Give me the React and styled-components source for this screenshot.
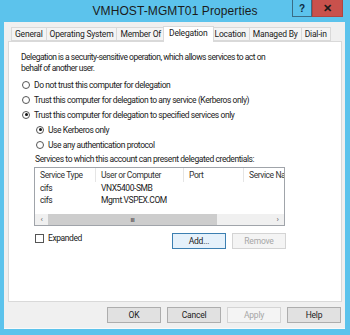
import React from 'react'
import styled, { createGlobalStyle } from 'styled-components'

const Global = createGlobalStyle`
  html, body { margin: 0; padding: 0; }
  body { font-family: Roboto, "Liberation Sans", Arial, sans-serif; }
`;

const Frame = styled.div`
  width: 350px;
  height: 335px;
  background: #5cc3ec;
  display: flex;
  flex-direction: column;
  box-sizing: border-box;
  overflow: hidden;
`;

const TitleBar = styled.div`
  height: 22px;
  display: grid;
  grid-template-columns: 58px 1fr 58px;
  flex-shrink: 0;
`;

const Title = styled.div`
  text-align: center;
  font-family: "Liberation Sans", Arial, sans-serif;
  font-size: 12px;
  line-height: 22px;
  color: #1b1b1b;
  letter-spacing: 0.1px;
`;

const Caption = styled.div`
  display: flex;
  align-items: flex-start;
`;

const CaptionBtn = styled.div`
  width: ${p => p.w}px;
  height: 17px;
  box-sizing: border-box;
  background: ${p => p.close ? '#c9514c' : '#5cc3ec'};
  border: 1px solid ${p => p.close ? '#b04541' : '#3a6c86'};
  border-top: none;
  display: flex;
  align-items: center;
  justify-content: center;
  font-family: "Liberation Sans", Arial, sans-serif;
  font-size: ${p => p.close ? 11 : 10}px;
  font-weight: bold;
  color: ${p => p.close ? '#1a1a1a' : '#0d2a40'};
`;

const Client = styled.div`
  flex: 1;
  margin: 0 5px 6px 4px;
  background: #f0f0f0;
  display: flex;
  flex-direction: column;
  padding: 4px 3px 0 4px;
  border-bottom: 1px solid #fafafa;
`;

const Tabs = styled.div`
  display: flex;
  align-items: flex-end;
  padding-left: 3px;
  height: 16px;
  position: relative;
  z-index: 1;
`;

const Tab = styled.div`
  height: ${p => p.active ? 16 : 14}px;
  box-sizing: border-box;
  padding: 0 ${p => p.active ? 5 : 3}px;
  margin: ${p => p.active ? '0 -2px' : '0 0 1px 0'};
  border: 1px solid #d9d9d9;
  border-bottom: ${p => p.active ? 'none' : '1px solid #d9d9d9'};
  margin-left: ${p => p.first ? 0 : (p.active ? -2 : -1)}px;
  background: ${p => p.active ? '#ffffff' : '#f4f4f4'};
  font-size: 8.5px;
  letter-spacing: -0.2px;
  line-height: 12px;
  color: #222;
  white-space: nowrap;
  position: relative;
  z-index: ${p => p.active ? 2 : 1};
`;

const Panel = styled.div`
  height: 261px;
  margin-top: -1px;
  background: #fff;
  border: 1px solid #d9d9d9;
  box-sizing: border-box;
  padding: 10px 0 0 12px;
  font-size: 8.5px;
  letter-spacing: -0.42px;
  color: #222;
`;

const Para = styled.div`
  line-height: 10.5px;
  white-space: nowrap;
  letter-spacing: -0.5px;
`;

const RadioRow = styled.div`
  display: flex;
  align-items: center;
  gap: 4px;
  height: 15px;
  margin-left: ${p => p.indent ? 15 : 1}px;
  margin-top: ${p => p.gap || 0}px;
  white-space: nowrap;
`;

const Radio = styled.span`
  width: 8px;
  height: 8px;
  border-radius: 50%;
  border: 1px solid #555;
  box-sizing: border-box;
  background: #fff;
  display: flex;
  align-items: center;
  justify-content: center;
  flex-shrink: 0;
  &::after {
    content: '';
    width: 3px;
    height: 3px;
    border-radius: 50%;
    background: ${p => p.checked ? '#111' : 'transparent'};
  }
`;

const Label = styled.div`
  margin: 2px 0 0 14px;
  line-height: 11px;
`;

const ListBox = styled.div`
  margin: 2px 0 0 13px;
  width: 251px;
  height: 59px;
  box-sizing: border-box;
  border: 1px solid #a0a4aa;
  display: flex;
  flex-direction: column;
  overflow: hidden;
`;

const HeaderRow = styled.div`
  display: flex;
  height: 14px;
  flex-shrink: 0;
`;

const HeadCell = styled.div`
  width: ${p => p.w}px;
  flex-shrink: 0;
  box-sizing: border-box;
  padding-left: 5px;
  border-right: 1px solid #e5e5e5;
  line-height: 14px;
  white-space: nowrap;
  overflow: hidden;
  color: #333;
`;

const Rows = styled.div`
  flex: 1;
`;

const Row = styled.div`
  display: flex;
  height: 12px;
  line-height: 12px;
`;

const Cell = styled.div`
  width: ${p => p.w}px;
  flex-shrink: 0;
  padding-left: 5px;
  box-sizing: border-box;
  white-space: nowrap;
`;

const HScroll = styled.div`
  height: 11px;
  display: flex;
  flex-shrink: 0;
  background: #f0f0f0;
`;

const Arrow = styled.div`
  width: 13px;
  display: flex;
  align-items: center;
  justify-content: center;
  font-size: 8px;
  color: #606060;
  background: #f0f0f0;
`;

const Thumb = styled.div`
  width: 169px;
  background: #cdcdcd;
  display: flex;
  align-items: center;
  justify-content: center;
  font-size: 6px;
  color: #606060;
  letter-spacing: -0.5px;
  font-weight: bold;
`;

const Track = styled.div`
  flex: 1;
`;

const UnderRow = styled.div`
  display: flex;
  align-items: flex-start;
  margin: 7px 0 0 14px;
  width: 251px;
`;

const Check = styled.span`
  width: 9px;
  height: 9px;
  border: 1px solid #555;
  box-sizing: border-box;
  background: #fff;
  display: inline-block;
  margin-right: 4px;
  flex-shrink: 0;
`;

const CheckLabel = styled.div`
  display: flex;
  align-items: center;
  line-height: 10px;
  flex: 1;
`;

const Button = styled.div`
  width: ${p => p.w || 54}px;
  height: 16px;
  box-sizing: border-box;
  display: flex;
  align-items: center;
  justify-content: center;
  font-size: 8.5px;
  letter-spacing: -0.2px;
  border: 1px solid ${p => p.disabled ? '#d4d4d4' : p.focused ? '#3c7fb1' : '#adadad'};
  background: ${p => p.disabled ? '#f4f4f4' : p.focused ? '#e5f1fb' : '#e1e1e1'};
  color: ${p => p.disabled ? '#a6a6a6' : '#1b1b1b'};
  margin-left: ${p => p.ml || 0}px;
`;

const Footer = styled.div`
  display: flex;
  justify-content: flex-end;
  gap: 6px;
  padding: 5px 1px 0 0;
`;

const cols = [61, 88, 60, 60]

export default function App() {
  return (
    <>
      <Global />
      <Frame>
        <TitleBar>
          <div />
          <Title>VMHOST-MGMT01 Properties</Title>
          <Caption>
            <CaptionBtn w={20}>?</CaptionBtn>
            <CaptionBtn w={31} close>✕</CaptionBtn>
          </Caption>
        </TitleBar>
        <Client>
          <Tabs>
            <Tab first>General</Tab>
            <Tab>Operating System</Tab>
            <Tab>Member Of</Tab>
            <Tab active>Delegation</Tab>
            <Tab>Location</Tab>
            <Tab>Managed By</Tab>
            <Tab>Dial-in</Tab>
          </Tabs>
          <Panel>
            <Para>
              Delegation is a security-sensitive operation, which allows services to act on<br />
              behalf of another user.
            </Para>
            <RadioRow gap={4}><Radio />Do not trust this computer for delegation</RadioRow>
            <RadioRow><Radio />Trust this computer for delegation to any service (Kerberos only)</RadioRow>
            <RadioRow><Radio checked />Trust this computer for delegation to specified services only</RadioRow>
            <RadioRow indent><Radio checked />Use Kerberos only</RadioRow>
            <RadioRow indent><Radio />Use any authentication protocol</RadioRow>
            <Label>Services to which this account can present delegated credentials:</Label>
            <ListBox>
              <HeaderRow>
                <HeadCell w={cols[0]}>Service Type</HeadCell>
                <HeadCell w={cols[1]}>User or Computer</HeadCell>
                <HeadCell w={cols[2]}>Port</HeadCell>
                <HeadCell w={cols[3]}>Service Name</HeadCell>
              </HeaderRow>
              <Rows>
                <Row><Cell w={cols[0]}>cifs</Cell><Cell w={cols[1]}>VNX5400-SMB</Cell></Row>
                <Row><Cell w={cols[0]}>cifs</Cell><Cell w={cols[1]}>Mgmt.VSPEX.COM</Cell></Row>
              </Rows>
              <HScroll>
                <Arrow>&lsaquo;</Arrow>
                <Thumb>III</Thumb>
                <Track />
                <Arrow>&rsaquo;</Arrow>
              </HScroll>
            </ListBox>
            <UnderRow>
              <CheckLabel><Check />Expanded</CheckLabel>
              <Button focused>Add...</Button>
              <Button disabled ml={6}>Remove</Button>
            </UnderRow>
          </Panel>
          <Footer>
            <Button>OK</Button>
            <Button>Cancel</Button>
            <Button disabled>Apply</Button>
            <Button>Help</Button>
          </Footer>
        </Client>
      </Frame>
    </>
  )
}
